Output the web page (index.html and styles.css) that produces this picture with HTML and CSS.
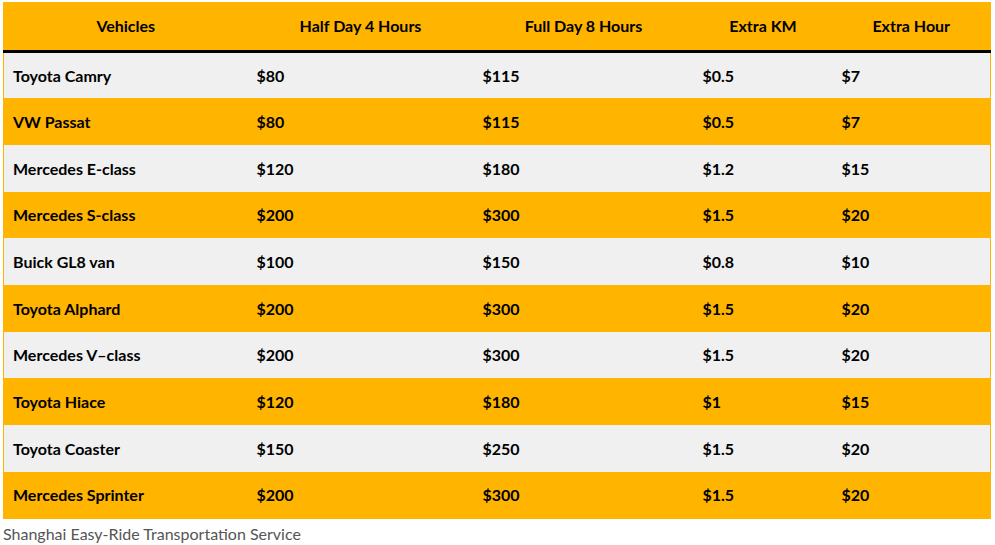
FILE: index.html
```html
<!DOCTYPE html>
<html>
<head>
<meta charset="utf-8">
<link rel="stylesheet" href="styles.css">
</head>
<body>
<div class="wrap">
<table class="rates">
<colgroup>
<col class="c1"><col class="c2"><col class="c3"><col class="c4"><col class="c5">
</colgroup>
<thead>
<tr><th>Vehicles</th><th>Half Day 4 Hours</th><th>Full Day 8 Hours</th><th>Extra KM</th><th>Extra Hour</th></tr>
</thead>
<tbody>
<tr><td>Toyota Camry</td><td>$80</td><td>$115</td><td>$0.5</td><td>$7</td></tr>
<tr><td>VW Passat</td><td>$80</td><td>$115</td><td>$0.5</td><td>$7</td></tr>
<tr><td>Mercedes E-class</td><td>$120</td><td>$180</td><td>$1.2</td><td>$15</td></tr>
<tr><td>Mercedes S-class</td><td>$200</td><td>$300</td><td>$1.5</td><td>$20</td></tr>
<tr><td>Buick GL8 van</td><td>$100</td><td>$150</td><td>$0.8</td><td>$10</td></tr>
<tr><td>Toyota Alphard</td><td>$200</td><td>$300</td><td>$1.5</td><td>$20</td></tr>
<tr><td>Mercedes V–class</td><td>$200</td><td>$300</td><td>$1.5</td><td>$20</td></tr>
<tr><td>Toyota Hiace</td><td>$120</td><td>$180</td><td>$1</td><td>$15</td></tr>
<tr><td>Toyota Coaster</td><td>$150</td><td>$250</td><td>$1.5</td><td>$20</td></tr>
<tr><td>Mercedes Sprinter</td><td>$200</td><td>$300</td><td>$1.5</td><td>$20</td></tr>
</tbody>
</table>
<p class="caption">Shanghai Easy-Ride Transportation Service</p>
</div>
</body>
</html>
```

FILE: styles.css
```css
html, body {
  margin: 0;
  padding: 0;
  background: #ffffff;
}
.wrap {
  padding: 2px 3px;
  font-family: Lato, "Liberation Sans", sans-serif;
}
.rates {
  width: 987px;
  table-layout: fixed;
  border-collapse: collapse;
  border: 1px solid #FFB400;
  background: #FFB400;
  color: #000;
  font-size: 16px;
  font-weight: 700;
}
.c1 { width: 244px; }
.c2 { width: 226px; }
.c3 { width: 220px; }
.c4 { width: 139px; }
.c5 { width: 158px; }
.rates th {
  height: 49px;
  padding: 0 9px 2px;
  text-align: center;
  border-bottom: 3px solid #000;
  box-sizing: border-box;
  font-weight: 700;
}
.rates td {
  height: 46.7px;
  padding: 0 9px;
  text-align: left;
  box-sizing: border-box;
}
.rates tbody tr:nth-child(odd) {
  background: #F0F0F0;
}
.rates tbody tr:nth-child(even) {
  background: #FFB400;
}
.caption {
  margin: 5px 0 0 0;
  font-size: 16px;
  color: #555;
  font-weight: 400;
}
```
